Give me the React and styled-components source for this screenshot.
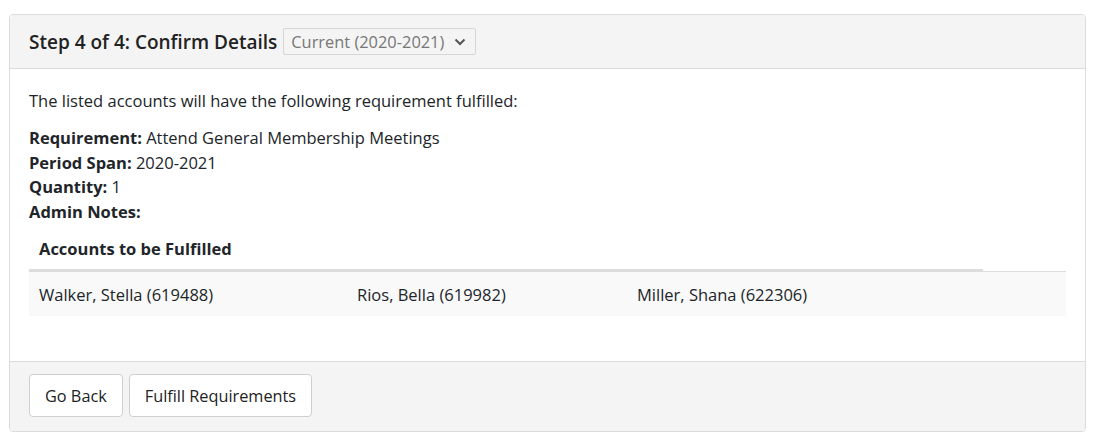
import React from 'react';
import styled, { createGlobalStyle } from 'styled-components';

const GlobalStyle = createGlobalStyle`
  body {
    margin: 0;
    background: #fff;
    font-family: "Open Sans", "Noto Sans", sans-serif;
    color: #212529;
  }
`;

const Page = styled.div`
  padding: 14px 10px 15px 9px;
`;

const Card = styled.div`
  border: 1px solid #dcdcdc;
  border-radius: 4px;
  overflow: hidden;
`;

const CardHeader = styled.div`
  display: flex;
  align-items: center;
  gap: 6px;
  height: 53px;
  padding: 0 19px;
  background: #f4f4f4;
  border-bottom: 1px solid #dcdcdc;
`;

const Title = styled.h3`
  margin: 0;
  font-size: 19px;
  font-weight: 600;
  color: #222;
`;

const PeriodSelect = styled.div`
  display: flex;
  align-items: center;
  justify-content: space-between;
  box-sizing: border-box;
  width: 193px;
  height: 27px;
  padding: 0 8px 0 7px;
  border: 1px solid #d6d6d6;
  border-radius: 2px;
  background: #f4f4f4;
  color: #777;
  font-size: 16.4px;
`;

const CardBody = styled.div`
  padding: 20px 19px 45px;
  font-size: 16.5px;
  background: #fff;
`;

const Lead = styled.p`
  margin: 0 0 13px;
  line-height: 24px;
`;

const DetailLine = styled.div`
  line-height: 24.6px;
  b {
    font-weight: 700;
  }
`;

const Table = styled.div`
  margin-top: 11px;
  display: grid;
  grid-template-columns: 318px 280px 356px 1fr;
`;

const HeadCell = styled.div`
  grid-column: span ${(p) => p.span || 1};
  box-sizing: border-box;
  padding: 0 10px 9px;
  height: 36px;
  display: flex;
  align-items: flex-end;
  font-weight: 700;
  border-bottom: 2px solid ${(p) => (p.empty ? 'transparent' : '#dddddd')};
`;

const Cell = styled.div`
  padding: 0 10px;
  height: 45px;
  display: flex;
  align-items: center;
  background: #f9f9f9;
  border-top: 1px solid #dddddd;
  box-sizing: border-box;
`;

const CardFooter = styled.div`
  display: flex;
  gap: 6px;
  padding: 12px 19px 14px;
  background: #f4f4f4;
  border-top: 1px solid #dcdcdc;
`;

const Button = styled.button`
  height: 43px;
  padding: 0 15px;
  font-family: inherit;
  font-size: 16.3px;
  color: #222;
  background: #fff;
  border: 1px solid #cfcfcf;
  border-radius: 4px;
  cursor: pointer;
`;

const Chevron = () => (
  <svg width="14" height="14" viewBox="0 0 14 14">
    <path d="M2.5 4.5l4.5 4.5 4.5-4.5" fill="none" stroke="#555" strokeWidth="2" />
  </svg>
);

const accounts = ['Walker, Stella (619488)', 'Rios, Bella (619982)', 'Miller, Shana (622306)'];

const App = () => (
  <Page>
    <GlobalStyle />
    <Card>
      <CardHeader>
        <Title>Step 4 of 4: Confirm Details</Title>
        <PeriodSelect>
          <span>Current (2020-2021)</span>
          <Chevron />
        </PeriodSelect>
      </CardHeader>
      <CardBody>
        <Lead>The listed accounts will have the following requirement fulfilled:</Lead>
        <DetailLine><b>Requirement:</b> Attend General Membership Meetings</DetailLine>
        <DetailLine><b>Period Span:</b> 2020-2021</DetailLine>
        <DetailLine><b>Quantity:</b> 1</DetailLine>
        <DetailLine><b>Admin Notes:</b></DetailLine>
        <Table>
          <HeadCell span={3}>Accounts to be Fulfilled</HeadCell>
          <HeadCell empty />
          {accounts.map((a) => (
            <Cell key={a}>{a}</Cell>
          ))}
          <Cell />
        </Table>
      </CardBody>
      <CardFooter>
        <Button>Go Back</Button>
        <Button>Fulfill Requirements</Button>
      </CardFooter>
    </Card>
  </Page>
);

export default App;
